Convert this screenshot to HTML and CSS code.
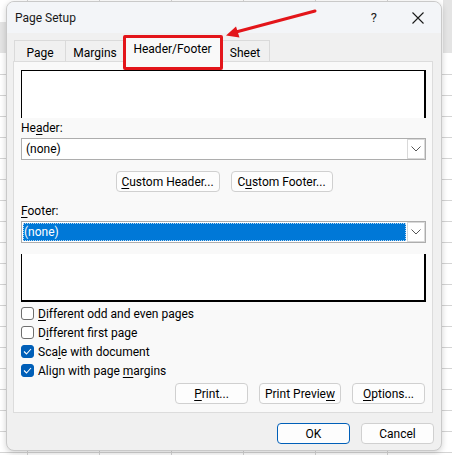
FILE: index.html
```html
<!DOCTYPE html>
<html>
<head>
<meta charset="utf-8">
<link rel="stylesheet" href="styles.css">
</head>
<body>
<div class="dialog">
  <div class="titlebar">
    <span class="title">Page Setup</span>
    <span class="help">?</span>
    <svg class="close" width="12" height="12" viewBox="0 0 12 12"><path d="M0.5 0.5 L11.5 11.5 M11.5 0.5 L0.5 11.5" stroke="#1a1a1a" stroke-width="1.1" fill="none"/></svg>
  </div>
  <div class="tabs">
    <div class="tab t-page">Page</div>
    <div class="tab t-margins">Margins</div>
    <div class="tab t-hf active">Header/Footer</div>
    <div class="tab t-sheet">Sheet</div>
  </div>
  <div class="panel">
    <div class="preview preview-top"></div>
    <div class="label">He<u>a</u>der:</div>
    <div class="select">
      <span class="value">(none)</span>
      <span class="drop"><svg width="10" height="6" viewBox="0 0 10 6"><path d="M0.5 0.5 L5 5 L9.5 0.5" stroke="#555" stroke-width="1" fill="none"/></svg></span>
    </div>
    <div class="custom-row">
      <div class="btn btn-custom"><u>C</u>ustom Header...</div>
      <div class="btn btn-custom">C<u>u</u>stom Footer...</div>
    </div>
    <div class="label label-footer"><u>F</u>ooter:</div>
    <div class="select select-focus">
      <span class="value value-sel">(none)</span>
      <span class="drop"><svg width="10" height="6" viewBox="0 0 10 6"><path d="M0.5 0.5 L5 5 L9.5 0.5" stroke="#555" stroke-width="1" fill="none"/></svg></span>
    </div>
    <div class="preview preview-bottom"></div>
    <div class="checks">
      <div class="check"><span class="box"></span><span><u>D</u>ifferent odd and even pages</span></div>
      <div class="check"><span class="box"></span><span>D<u>i</u>fferent first page</span></div>
      <div class="check"><span class="box on"><svg width="9" height="7" viewBox="0 0 9 7"><path d="M1 3.5 L3.5 6 L8 1" stroke="#fff" stroke-width="1.1" fill="none"/></svg></span><span>Sca<u>l</u>e with document</span></div>
      <div class="check"><span class="box on"><svg width="9" height="7" viewBox="0 0 9 7"><path d="M1 3.5 L3.5 6 L8 1" stroke="#fff" stroke-width="1.1" fill="none"/></svg></span><span>Align with page <u>m</u>argins</span></div>
    </div>
    <div class="print-row">
      <div class="btn btn-print"><u>P</u>rint...</div>
      <div class="btn btn-preview">Print Previe<u>w</u></div>
      <div class="btn btn-print"><u>O</u>ptions...</div>
    </div>
  </div>
  <div class="footer-row">
    <div class="btn btn-ok">OK</div>
    <div class="btn btn-cancel">Cancel</div>
  </div>
  <div class="redbox"></div>
</div>
<svg class="arrow" width="452" height="60" viewBox="0 0 452 60">
  <line x1="315" y1="11" x2="236" y2="32" stroke="#e3151a" stroke-width="3" stroke-linecap="round"/>
  <polygon points="226,35.5 239.5,37.5 236,26.5" fill="#e3151a"/>
</svg>
</body>
</html>
```
FILE: styles.css
```css
html, body {
  margin: 0;
  padding: 0;
}
body {
  width: 452px;
  height: 455px;
  overflow: hidden;
  position: relative;
  font-family: Roboto, "Noto Sans", sans-serif;
  font-size: 12px;
  color: #000;
  background:
    linear-gradient(#e4e4e4, #e4e4e4) 0 22px / 6px 31px no-repeat,
    linear-gradient(#e4e4e4, #e4e4e4) 443px 0 / 9px 53px no-repeat,
    repeating-linear-gradient(to bottom, transparent 0, transparent 20px, #d4d4d4 20px, #d4d4d4 21px) 0 54px / 100% 100% no-repeat,
    repeating-linear-gradient(to right, transparent 0, transparent 27px, #d4d4d4 27px, #d4d4d4 28px, transparent 28px, transparent 72px) 0 0 / 100% 100%,
    #ffffff;
  padding-top: 1px;
  box-sizing: border-box;
}
.dialog {
  position: relative;
  margin-left: 6px;
  width: 436px;
  height: 450px;
  box-sizing: border-box;
  border: 1px solid #c9c9c9;
  border-radius: 8px;
  background: #f0f0f0;
  box-shadow: 0 2px 6px rgba(0,0,0,0.18);
  display: flex;
  flex-direction: column;
  overflow: hidden;
}
.titlebar {
  height: 31px;
  flex: none;
  display: flex;
  align-items: center;
  padding-left: 8px;
  background: #f3f5f8;
}
.title {
  font-size: 12px;
  color: #1a1a1a;
  flex: 1;
  margin-top: 1px;
}
.help {
  font-size: 13px;
  color: #1a1a1a;
  margin-right: 35px;
}
.close {
  margin-right: 17px;
}
.tabs {
  height: 28px;
  flex: none;
  display: flex;
  align-items: flex-end;
  padding-left: 7px;
  position: relative;
  z-index: 2;
}
.tab {
  height: 21px;
  box-sizing: border-box;
  border: 1px solid #dadada;
  border-bottom: none;
  background: #f0f0f0;
  display: flex;
  align-items: center;
  justify-content: center;
  padding-top: 3px;
  margin-right: -1px;
}
.t-page { width: 52px; }
.t-margins { width: 60px; }
.t-hf { width: 97px; }
.t-sheet { width: 50px; }
.tab.active {
  background: #f9f9f9;
  border-color: #dadada;
  padding-top: 0;
  margin-bottom: -1px;
  height: 27px;
  position: relative;
  z-index: 3;
}
.panel {
  margin-left: 6px;
  width: 420px;
  height: 352px;
  box-sizing: border-box;
  border: 1px solid #dcdcdc;
  background: #f9f9f9;
  padding: 8px 6px 0 7px;
  display: flex;
  flex-direction: column;
  flex: none;
}
.preview {
  height: 48px;
  flex: none;
  background: #fff;
  box-sizing: border-box;
  border-left: 1px solid #000;
  border-right: 2px solid #000;
}
.preview-top {
  border-top: 1px solid #000;
}
.preview-bottom {
  border-bottom: 2px solid #000;
  margin-top: 11px;
}
.label {
  height: 20px;
  line-height: 21px;
}
.label-footer {
  margin-top: 9px;
}
.select {
  height: 22px;
  box-sizing: border-box;
  border: 1px solid #adadad;
  background: #fff;
  display: flex;
  align-items: stretch;
  padding: 1px;
}
.value {
  flex: 1;
  display: flex;
  align-items: center;
  padding-left: 3px;
}
.value-sel {
  background: #0078d7;
  color: #fff;
  outline: 1px dotted #b8d7f2;
  outline-offset: -1px;
  padding-left: 1px;
}
.drop {
  width: 16px;
  border: 1px solid #d9d9d9;
  margin: -1px -1px -1px 1px;
  display: flex;
  align-items: center;
  justify-content: center;
  background: #fff;
}
.custom-row {
  display: flex;
  justify-content: center;
  gap: 11px;
  margin-top: 11px;
  padding-left: 1px;
}
.btn {
  height: 21px;
  box-sizing: border-box;
  border: 1px solid #d0d0d0;
  border-radius: 4px;
  background: #fdfdfd;
  display: flex;
  align-items: center;
  justify-content: center;
  color: #000;
}
.btn-custom:first-child { width: 104px; }
.btn-custom:last-child { width: 102px; }
.checks {
  margin-top: 2px;
  display: flex;
  flex-direction: column;
}
.check {
  height: 19px;
  display: flex;
  align-items: center;
}
.box {
  width: 13px;
  height: 13px;
  box-sizing: border-box;
  border: 1px solid #6e6e6e;
  border-radius: 3px;
  background: #fff;
  margin-right: 4px;
  display: flex;
  align-items: center;
  justify-content: center;
}
.box.on {
  background: #005fb8;
  border-color: #005fb8;
}
.print-row {
  display: flex;
  justify-content: flex-end;
  gap: 11px;
  margin-top: 3px;
  padding-right: 1px;
}
.btn-print { width: 73px; }
.btn-preview { width: 82px; }
.footer-row {
  display: flex;
  justify-content: flex-end;
  gap: 11px;
  margin-top: 10px;
  padding-right: 7px;
}
.btn-ok {
  width: 73px;
  border-color: #005fb8;
}
.btn-cancel {
  width: 73px;
}
u {
  text-decoration: underline;
  text-underline-offset: 2px;
}
.redbox {
  position: absolute;
  left: 116px;
  top: 33px;
  width: 100px;
  height: 35px;
  box-sizing: border-box;
  border: 3px solid #e3151a;
  border-radius: 2px;
  z-index: 5;
}
.arrow {
  position: absolute;
  left: 0;
  top: 0;
  z-index: 10;
}
```
